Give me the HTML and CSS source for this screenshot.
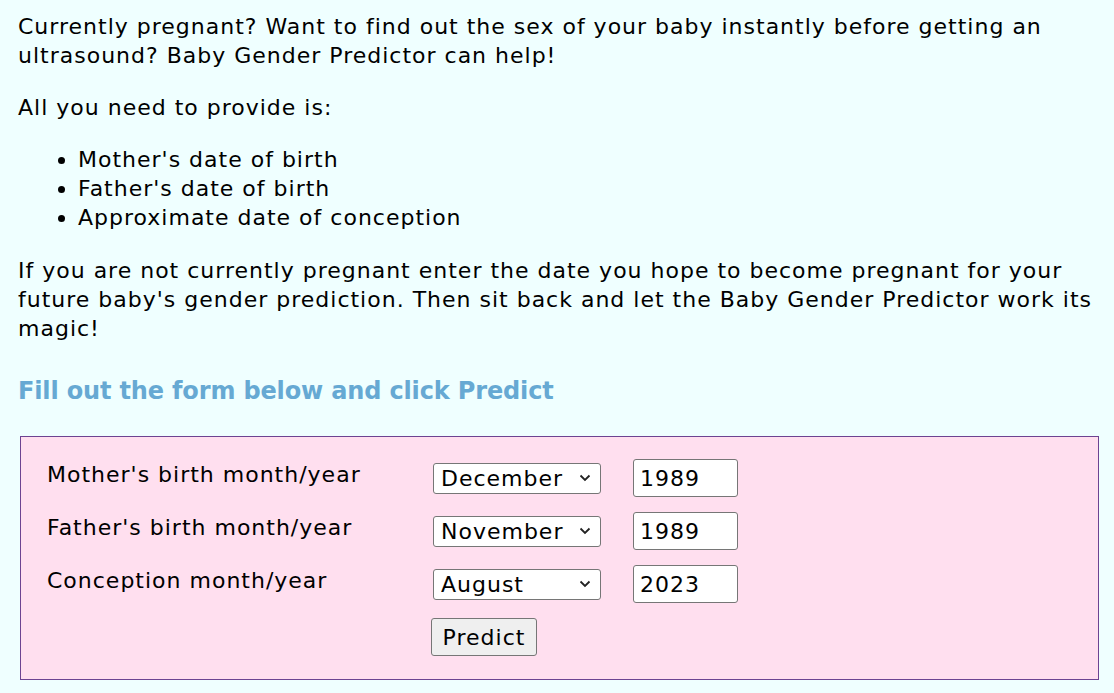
FILE: index.html
```html
<!DOCTYPE html>
<html>
<head>
<meta charset="utf-8">
<link rel="stylesheet" href="styles.css">
</head>
<body>
<p class="text">Currently pregnant? Want to find out the sex of your baby instantly before getting an ultrasound? Baby Gender Predictor can help!</p>
<p class="text">All you need to provide is:</p>
<ul class="list">
<li>Mother's date of birth</li>
<li>Father's date of birth</li>
<li>Approximate date of conception</li>
</ul>
<p class="text">If you are not currently pregnant enter the date you hope to become pregnant for your future baby's gender prediction. Then sit back and let the Baby Gender Predictor work its magic!</p>
<h3 class="heading">Fill out the form below and click Predict</h3>
<form class="form">
  <div class="row">
    <label class="label">Mother's birth month/year</label>
    <select class="month"><option>December</option></select>
    <input class="year" type="text" value="1989">
  </div>
  <div class="row">
    <label class="label">Father's birth month/year</label>
    <select class="month"><option>November</option></select>
    <input class="year" type="text" value="1989">
  </div>
  <div class="row">
    <label class="label">Conception month/year</label>
    <select class="month"><option>August</option></select>
    <input class="year" type="text" value="2023">
  </div>
  <div class="row">
    <span class="label"></span>
    <button class="btn" type="button">Predict</button>
  </div>
</form>
</body>
</html>
```
FILE: styles.css
```css
html, body {
  background: #efffff;
}
body {
  margin: 0;
  padding: 12px 12px 0 18px;
  font-family: "DejaVu Sans", Verdana, sans-serif;
  font-size: 22px;
  line-height: 29px;
  letter-spacing: 1px;
  color: #000;
}
.text {
  margin: 0 0 23px 0;
}
.list {
  margin: 0 0 24px 0;
  padding-left: 60px;
}
.heading {
  margin: 34px 0 0 0;
  font-size: 24px;
  line-height: 29px;
  letter-spacing: -0.15px;
  color: #66a9d3;
  font-weight: bold;
}
.form {
  margin: 30px 0 0 2px;
  width: 1079px;
  border: 1px solid #6d4391;
  background: #ffdfef;
  padding: 22px 26px 23px 26px;
  box-sizing: border-box;
  display: flex;
  flex-direction: column;
  gap: 15px;
}
.row {
  display: flex;
  align-items: center;
}
.label {
  width: 386px;
  flex: none;
  align-self: flex-start;
  margin-top: 1px;
}
.month {
  -webkit-appearance: none;
  appearance: none;
  width: 168px;
  height: 31px;
  font: 22px "DejaVu Sans", Verdana, sans-serif;
  letter-spacing: 1px;
  color: #000;
  background-color: #fff;
  background-image: url("data:image/svg+xml;utf8,<svg xmlns='http://www.w3.org/2000/svg' width='12' height='8' viewBox='0 0 12 8'><path d='M1.5 1.5 L6 6 L10.5 1.5' fill='none' stroke='%23222' stroke-width='1.8'/></svg>");
  background-repeat: no-repeat;
  background-position: right 9px center;
  border: 1px solid #767676;
  border-radius: 3px;
  padding: 0 3px 0 7px;
  margin: 0 32px 0 0;
}
.year {
  width: 105px;
  height: 38px;
  box-sizing: border-box;
  font: 22px "DejaVu Sans", Verdana, sans-serif;
  letter-spacing: 1px;
  color: #000;
  background: #fff;
  border: 1px solid #767676;
  border-radius: 3px;
  padding: 2px 6px;
  margin: 0;
}
.btn {
  margin-left: -2px;
  width: 106px;
  height: 38px;
  font: 22px "DejaVu Sans", Verdana, sans-serif;
  letter-spacing: 1px;
  color: #000;
  background: #efefef;
  border: 1px solid #767676;
  border-radius: 3px;
  padding: 0;
}
```
